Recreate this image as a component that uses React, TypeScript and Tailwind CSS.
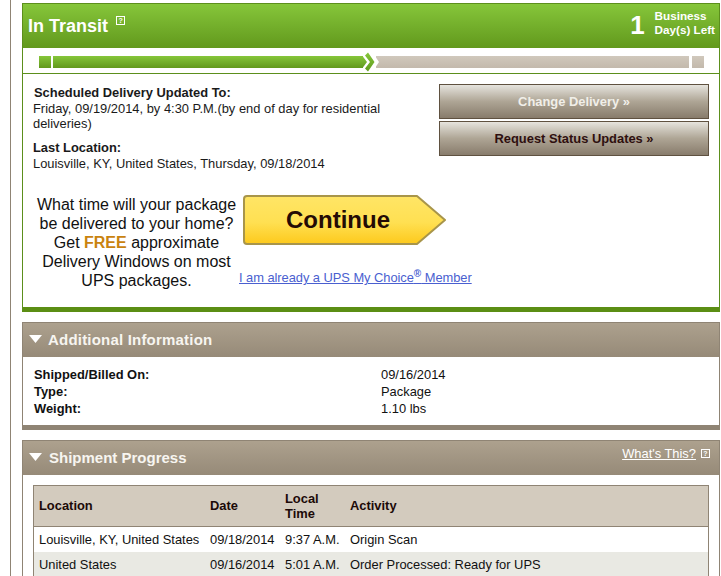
const font = "font-['Liberation_Sans',Arial,sans-serif]";

function Help({ className = "" }: { className?: string }) {
  return (
    <span className={`inline-flex h-[9px] w-[9px] items-center justify-center border border-white text-[7px] leading-none font-bold text-white ${className}`}>?</span>
  );
}

function Caret() {
  return (
    <svg width="13" height="8" viewBox="0 0 13 8" className="shrink-0">
      <path d="M0 0H13L6.5 8Z" fill="#fff" />
    </svg>
  );
}

const green = "bg-gradient-to-b from-[#86c63a] to-[#62991c]";
const tan = "bg-gradient-to-b from-[#ada18e] to-[#968a78]";
const greige = "bg-gradient-to-b from-[#d0c8bc] to-[#c3b9ac]";
const btn = "flex h-[35px] w-[270px] items-center justify-center border border-[#5f5140] bg-gradient-to-b from-[#e6e4de] via-[#aea595] to-[#887c6c] text-[12.9px] font-bold";
const cols = "grid grid-cols-[171px_75px_65px_1fr] items-center pl-[5px]";

export default function App() {
  return (
    <div className={`${font} h-[576px] w-[721px] overflow-hidden bg-white text-[12.9px] leading-[15px] text-[#111]`}>
      <div className="ml-[10px] h-full border-l border-[#8f8474] pl-[11px] pt-[3px] pr-[1px]">
        {/* In Transit */}
        <section className="border-x border-t border-[#5c8f1c] border-b-[5px] border-b-[#5b8e14]">
          <div className={`${green} flex h-[44px] items-start justify-between`}>
            <div className="flex items-start pl-[5px] pt-[11px]">
              <span className="text-[18px] leading-[22px] font-bold text-white">In Transit</span>
              <Help className="ml-[8px] mt-[1px]" />
            </div>
            <div className="flex items-start pr-[4px] pt-[5px] text-white">
              <span className="mr-[10px] mt-[3px] text-[26px] leading-[26px] font-bold">1</span>
              <span className="text-[11.7px] leading-[14px] font-bold">Business<br />Day(s) Left</span>
            </div>
          </div>
          <div className="flex h-[26px] items-start border-b border-[#5c8f1c] pl-[16px] pt-[8px]">
            <div className="flex h-[12px] items-center">
              <div className={`${green} h-[12px] w-[12px]`} />
              <div className={`${green} ml-[2px] h-[12px] w-[310px]`} />
              <svg width="20" height="20" viewBox="0 0 20 20" className="relative z-10 ml-[-3px] mr-[-4px] shrink-0">
                <defs>
                  <linearGradient id="c" x1="0" y1="0" x2="0" y2="1">
                    <stop offset="0" stopColor="#86c63a" />
                    <stop offset="1" stopColor="#5f9a1e" />
                  </linearGradient>
                </defs>
                <path d="M0 4H2.5L7 10L2.5 16H0Z" fill="url(#c)" />
                <path d="M12 4H15L19 10L15 16H12L15.5 10Z" fill="#fff" />
                <path d="M5 3.5L8 0.5L14.5 10L8 19.5L5 16.5L10 10Z" fill="url(#c)" />
              </svg>
              <div className={`${greige} h-[12px] w-[313px]`} />
              <div className={`${greige} ml-[3px] h-[12px] w-[12px]`} />
            </div>
          </div>
          <div className="flex h-[233px] flex-col">
            <div className="flex h-[121px] items-start">
              <div className="w-[415px] pl-[10px] pt-[11px] leading-[15.5px] text-[#1a1a1a]">
                <div className="ml-[1px] font-bold">Scheduled Delivery Updated To:</div>
                <div className="w-[370px]">Friday, 09/19/2014, by 4:30 P.M.(by end of day for residential deliveries)</div>
                <div className="mt-[8px] leading-[16px] font-bold">Last Location:</div>
                <div>Louisville, KY, United States, Thursday, 09/18/2014</div>
              </div>
              <div className="ml-[1px] flex flex-col gap-[2px] pt-[10px]">
                <div className={`${btn} text-[#f1efe9]`}>Change Delivery »</div>
                <div className={`${btn} text-[#2e0f0f]`}>Request Status Updates »</div>
              </div>
            </div>
            <div className="flex items-start">
              <div className="ml-[11px] w-[205px] text-center text-[16px] leading-[19px] text-[#111]">
                What time will your package be delivered to your home? Get <b className="text-[#c9830f]">FREE</b> approximate Delivery Windows on most UPS packages.
              </div>
              <div className="flex flex-col">
                <div className="relative ml-[4px] h-[50px] w-[204px]">
                  <svg width="204" height="50" viewBox="0 0 204 50" className="absolute inset-0">
                    <defs>
                      <linearGradient id="y" x1="0" y1="0" x2="0" y2="1">
                        <stop offset="0" stopColor="#ffe566" />
                        <stop offset="0.55" stopColor="#ffe052" />
                        <stop offset="1" stopColor="#fdc91c" />
                      </linearGradient>
                    </defs>
                    <path d="M4 1H174L202 25L174 49H4Q1 49 1 46V4Q1 1 4 1Z" fill="url(#y)" stroke="#a8954a" strokeWidth="2" strokeLinejoin="round" />
                  </svg>
                  <span className="absolute inset-x-0 top-[11px] pr-[14px] text-center text-[24px] leading-[28px] font-bold text-[#240b05]">Continue</span>
                </div>
                <a className="mt-[25px] whitespace-nowrap leading-[15px] tracking-[-0.05px] text-[#4a5fd0] underline">
                  I am already a UPS My Choice<sup className="text-[10px] leading-none font-bold">®</sup> Member
                </a>
              </div>
            </div>
          </div>
        </section>

        {/* Additional Information */}
        <section className="mt-[10px] border-x border-t border-[#8f8474] border-b-[5px] border-b-[#8f8474]">
          <div className={`${tan} flex h-[34px] items-center gap-[6px] pb-[2px] pl-[6px]`}>
            <Caret />
            <span className="text-[15px] font-bold tracking-[0.2px] text-[#f7f5f0]">Additional Information</span>
          </div>
          <div className="grid h-[68px] grid-cols-[347px_1fr] content-start pl-[11px] pt-[9px] leading-[17px]">
            <b>Shipped/Billed On:</b><span>09/16/2014</span>
            <b>Type:</b><span>Package</span>
            <b>Weight:</b><span>1.10 lbs</span>
          </div>
        </section>

        {/* Shipment Progress */}
        <section className="mt-[10px] border-x border-t border-[#8f8474]">
          <div className={`${tan} flex h-[34px] items-start justify-between pl-[6px]`}>
            <div className="flex h-full items-center gap-[7px] pb-[2px]">
              <Caret />
              <span className="text-[15px] font-bold text-[#f7f5f0]">Shipment Progress</span>
            </div>
            <div className="flex items-center gap-[5px] pr-[9px] pt-[5px]">
              <span className="text-white underline">What's This?</span>
              <Help />
            </div>
          </div>
          <div className="px-[10px] pt-[10px]">
            <div className="border border-[#8f8474]">
              <div className={`${cols} h-[41px] border-b border-[#8f8474] bg-[#d3cbbe] font-bold text-[#1c0a08]`}>
                <span className="pb-[2px]">Location</span><span className="pb-[2px]">Date</span><span>Local<br />Time</span><span className="pb-[2px]">Activity</span>
              </div>
              <div className={`${cols} h-[25px]`}>
                <span className="whitespace-nowrap">Louisville, KY, United States</span><span>09/18/2014</span><span>9:37 A.M.</span><span>Origin Scan</span>
              </div>
              <div className={`${cols} h-[25px] bg-[#e9e9e3]`}>
                <span>United States</span><span>09/16/2014</span><span>5:01 A.M.</span><span>Order Processed: Ready for UPS</span>
              </div>
            </div>
          </div>
        </section>
      </div>
    </div>
  );
}
